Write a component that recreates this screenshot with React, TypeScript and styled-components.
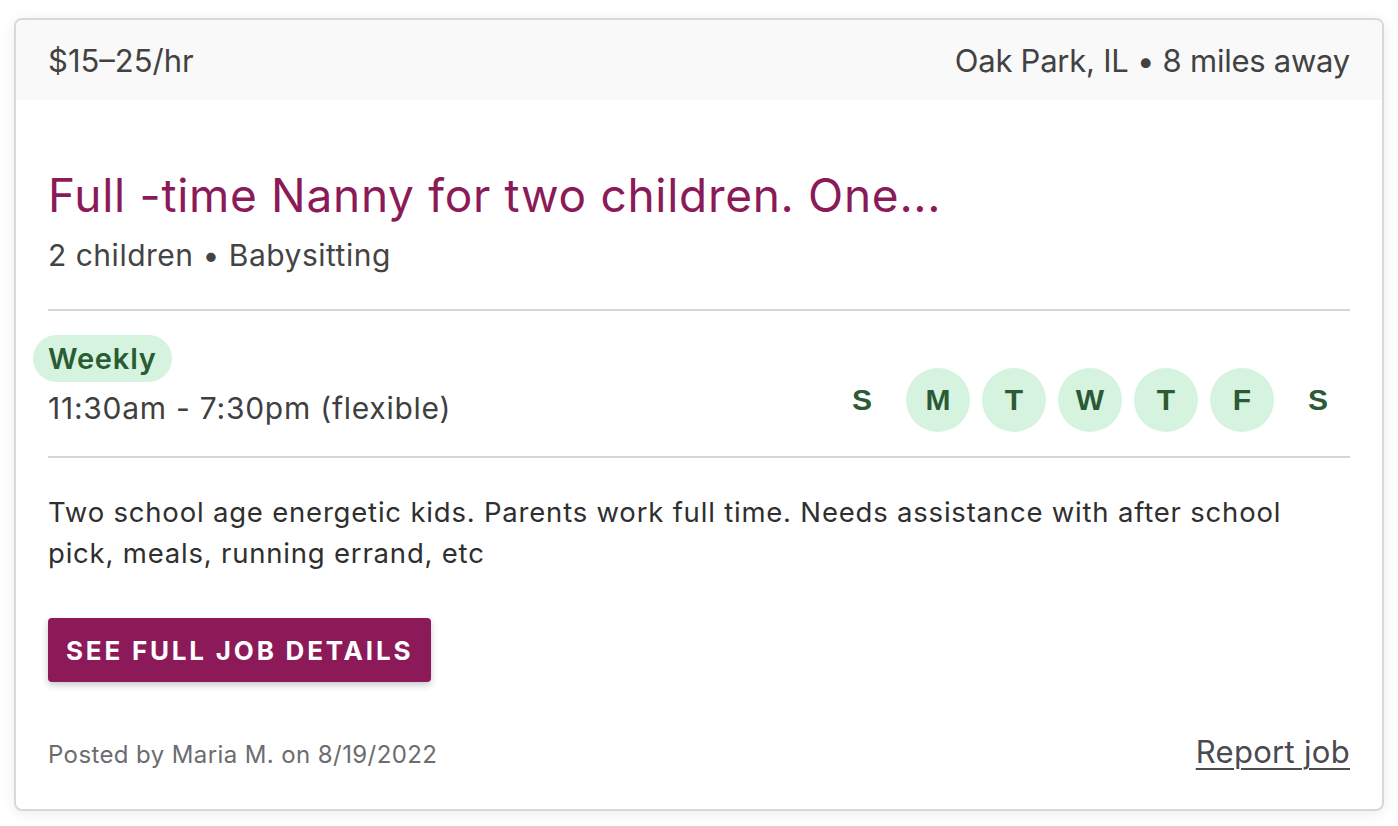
import React from "react";
import styled, { createGlobalStyle } from "styled-components";

const Global = createGlobalStyle`
  html, body { margin: 0; padding: 0; background: #ffffff; }
  body { font-family: Inter, "Noto Sans", "Liberation Sans", sans-serif; }
  * { box-sizing: border-box; }
`;

const Page = styled.div`
  padding: 18px 14px 14px 14px;
  background: #fff;
`;

const Card = styled.article`
  border: 2px solid #d9d9d4;
  border-radius: 8px;
  background: #fff;
  overflow: hidden;
  box-shadow: 0 2px 14px rgba(0, 0, 0, 0.08);
`;

const Header = styled.header`
  height: 80px;
  background: #f9f9f9;
  display: flex;
  align-items: center;
  justify-content: space-between;
  padding: 0 32px;
  font-size: 31px;
  color: #424242;
`;

const Price = styled.span``;

const Location = styled.span`
  letter-spacing: -0.25px;
`;

const Body = styled.div`
  padding: 0 32px 39px 32px;
`;

const Title = styled.h2`
  margin: 68px 0 0 0;
  font-size: 46px;
  font-weight: 400;
  line-height: 54px;
  color: #8b1a58;
  letter-spacing: 0.7px;
`;

const Sub = styled.div`
  margin-top: 13px;
  font-size: 30px;
  line-height: 40px;
  color: #444;
  letter-spacing: 0.5px;
`;

const Divider = styled.hr`
  border: none;
  border-top: 2px solid #d6d6d6;
  margin: 0;
`;

const Spacer = styled.div<{ $h: number }>`
  height: ${(p) => p.$h}px;
`;

const Schedule = styled.section`
  display: flex;
  align-items: flex-end;
  justify-content: space-between;
  padding: 24px 0 24px 0;
`;

const ScheduleLeft = styled.div`
  display: flex;
  flex-direction: column;
  align-items: flex-start;
`;

const Badge = styled.span`
  margin-left: -15px;
  height: 47px;
  padding: 0 15px;
  border-radius: 24px;
  background: #d6f3e0;
  color: #2a5c33;
  font-weight: 600;
  font-size: 29px;
  letter-spacing: 0.8px;
  display: inline-flex;
  align-items: center;
`;

const Hours = styled.div`
  margin-top: 6px;
  margin-bottom: 4px;
  font-size: 30px;
  line-height: 40px;
  color: #404040;
  letter-spacing: 0.75px;
`;

const Days = styled.div`
  display: flex;
  gap: 12px;
  margin-bottom: 0;
`;

const Day = styled.span<{ $on?: boolean }>`
  width: 64px;
  height: 64px;
  border-radius: 50%;
  display: flex;
  align-items: center;
  justify-content: center;
  background: ${(p) => (p.$on ? "#d6f3e0" : "transparent")};
  color: #2b5a34;
  font-family: "Liberation Sans", Arial, sans-serif;
  font-weight: 700;
  font-size: 30px;
`;

const Desc = styled.p`
  margin: 34px 0 0 0;
  font-size: 27.5px;
  line-height: 41px;
  color: #2f2f2f;
  letter-spacing: 0.8px;
  max-width: 1290px;
`;

const Button = styled.button`
  margin-top: 44px;
  height: 64px;
  padding: 0 18px;
  border: none;
  border-radius: 4px;
  background: #8c1a59;
  color: #fff;
  font-family: Inter, "Noto Sans", sans-serif;
  font-weight: 700;
  font-size: 26px;
  letter-spacing: 2.8px;
  text-transform: uppercase;
  box-shadow: 0 3px 7px rgba(0, 0, 0, 0.22);
  cursor: pointer;
`;

const Footer = styled.footer`
  margin-top: 51px;
  display: flex;
  align-items: baseline;
  justify-content: space-between;
`;

const Posted = styled.span`
  font-size: 24px;
  color: #6c6c70;
  letter-spacing: 0.4px;
`;

const Report = styled.a`
  font-size: 31px;
  color: #4a4a50;
  text-decoration: underline;
  text-underline-offset: 5px;
  text-decoration-thickness: 2px;
  letter-spacing: 0.3px;
  cursor: pointer;
`;

const days = [
  { l: "S", on: false },
  { l: "M", on: true },
  { l: "T", on: true },
  { l: "W", on: true },
  { l: "T", on: true },
  { l: "F", on: true },
  { l: "S", on: false },
];

export default function App() {
  return (
    <Page>
      <Global />
      <Card>
        <Header>
          <Price>$15–25/hr</Price>
          <Location>Oak Park, IL • 8 miles away</Location>
        </Header>
        <Body>
          <Title>Full -time Nanny for two children. One...</Title>
          <Sub>2 children • Babysitting</Sub>
          <Spacer $h={34} />
          <Divider />
          <Schedule>
            <ScheduleLeft>
              <Badge>Weekly</Badge>
              <Hours>11:30am - 7:30pm (flexible)</Hours>
            </ScheduleLeft>
            <Days>
              {days.map((d, i) => (
                <Day key={i} $on={d.on}>
                  {d.l}
                </Day>
              ))}
            </Days>
          </Schedule>
          <Divider />
          <Desc>
            Two school age energetic kids. Parents work full time. Needs assistance with after school
            pick, meals, running errand, etc
          </Desc>
          <Button>See full job details</Button>
          <Footer>
            <Posted>Posted by Maria M. on 8/19/2022</Posted>
            <Report>Report job</Report>
          </Footer>
        </Body>
      </Card>
    </Page>
  );
}
